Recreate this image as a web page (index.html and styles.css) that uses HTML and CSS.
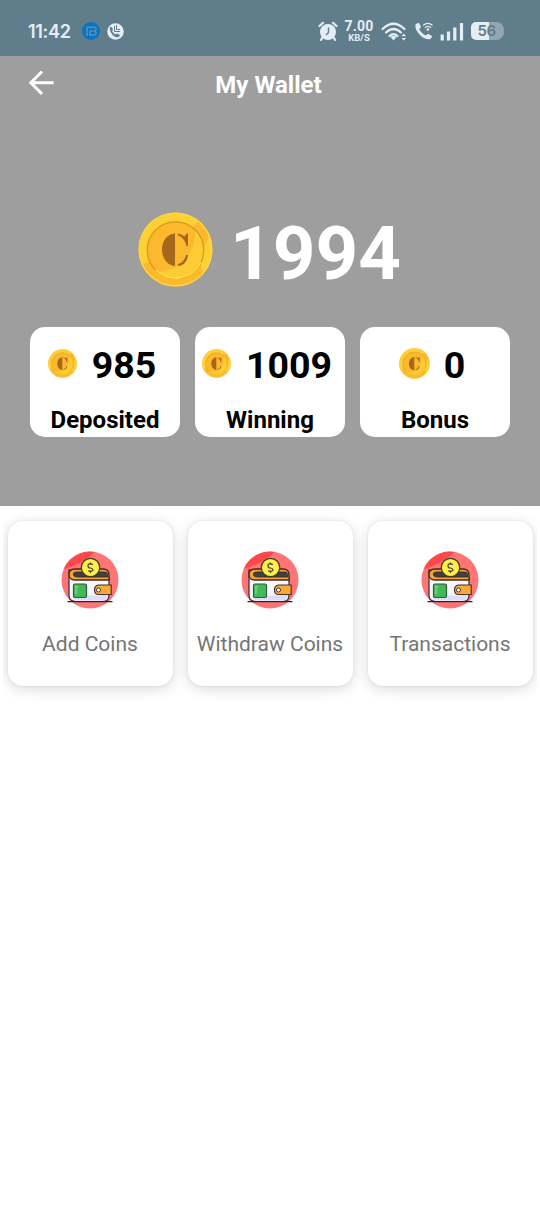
FILE: index.html
```html
<!DOCTYPE html>
<html lang="en">
<head>
<meta charset="utf-8">
<title>My Wallet</title>
<link rel="stylesheet" href="styles.css">
</head>
<body>
<svg class="sprite" width="0" height="0" aria-hidden="true">
  <defs>
    <clipPath id="coin-face"><circle cx="37.5" cy="38" r="28"/></clipPath>
    <clipPath id="disc"><circle cx="30" cy="30" r="28.5"/></clipPath>
  </defs>
  <symbol id="coin" viewBox="0 0 75 75">
    <circle cx="37.5" cy="37.5" r="37" fill="#fcb92c"/>
    <path d="M60 9A36.500 36.500 0 0 0 4 52Q30 48 60 9Z" fill="#fdd033"/>
    <path d="M71 24A36.500 36.500 0 0 1 66 60Q58 55 71 24Z" fill="#fdd033"/>
    <circle cx="37.5" cy="37.5" r="36.4" fill="none" stroke="#fbd944" stroke-width="1.2"/>
    <circle cx="37.5" cy="38" r="28.5" fill="#fdb92e"/>
    <path clip-path="url(#coin-face)" d="M56 8Q62 38 38 56L12 62L38 70L70 54V20Z" fill="#fdcb33"/>
    <circle cx="37.5" cy="38" r="28.2" fill="none" stroke="#d99a20" stroke-width="1.3"/>
    <path d="M63 50A28.2 28.2 0 0 1 18 58" fill="none" stroke="#fde34a" stroke-width="1.3"/>
    <g fill="#a5681b">
      <path d="M37 21.500C29 22 24 29 24 37.500S29 53.500 37 54Z"/>
      <path d="M40 21.500Q44 22 46.500 24.500L48.500 21.500H50V34H48.500C47 28 44 24.500 40 23.500Z"/>
      <path d="M40 54C46 53.500 49.500 49 50 43H48C46.500 48.500 44 51 40 52Z"/>
    </g>
  </symbol>
  <symbol id="wallet" viewBox="0 0 60 60">
    <circle cx="30" cy="30" r="28.500" fill="#ff7475"/>
    <path clip-path="url(#disc)" d="M0 20Q22 15 37 0H0Z" fill="#ff484c"/>
    <path d="M9 20V45Q9 51.500 16 51.500H43Q49 51.500 49 45V27Z" fill="#f7f6ff" stroke="#332c36" stroke-width="1.200"/>
    <path d="M12 46Q13 50 18 50.500H43Q48 50 48 45Z" fill="#dcdcff"/>
    <path d="M49 30H15Q9 30 9 24.500T15 19H43Q49 19 49 25Z" fill="#f6a22b" stroke="#382b24" stroke-width="1.300"/>
    <path d="M14 26Q12 22 17 22H45Q48 22 48 27H18Q15 27 14 26Z" fill="#423e43" stroke="#2b282b" stroke-width=".8"/>
    <circle cx="30.500" cy="17.500" r="9.200" fill="#ffee4b" stroke="#403a24" stroke-width="1.200"/>
    <path d="M33 14.500Q28 12.800 28 15.500T30.500 18Q33 18.500 33 20T28 21M30.500 12.500V14M30.500 21V23" fill="none" stroke="#3c3827" stroke-width="1.200"/>
    <rect x="13.500" y="34" width="13" height="13.500" rx="1.500" fill="#45b859" stroke="#285f37" stroke-width="1.200"/>
    <path d="M16 44V36.500H18" fill="none" stroke="#8dde86" stroke-width="1.200"/>
    <path d="M51.200 35H38.500Q34.500 35.500 34.500 40T38.500 44.500H51.200Z" fill="#f9a936" stroke="#493227" stroke-width="1.200"/>
    <circle cx="38.500" cy="40" r="2" fill="#fff" stroke="#493227" stroke-width="1"/>
    <path d="M7.500 51.700H52.500" stroke="#29242b" stroke-width="1.200"/>
  </symbol>
</svg>

<div class="status">
  <span class="clock">11:42</span>
  <svg class="app-dot" width="18" height="18" viewBox="0 0 18 18"><circle cx="9" cy="9" r="9" fill="#0875c4"/><path d="M5 14V5.200H12.500Q14 5.200 14 7T12.500 9H8M12.500 9Q14 9.500 14 11.200T12.500 13H8V9" fill="none" stroke="#5e8eae" stroke-width="1.500"/></svg>
  <svg class="call-dot" width="17" height="17" viewBox="0 0 17 17"><circle cx="8.500" cy="8.500" r="8.300" fill="#e5edf7"/><path d="M2.800 4L5 4.200L6 7L5 8.200Q6.500 10.500 8.800 11.500L10.500 10.500L13.200 12.500Q11 15.200 7.500 13.500Q2.500 10 2.800 4Z" fill="#607d8b"/><path d="M7.500 3V8.500H13M9.500 2V6.500H13" fill="none" stroke="#607d8b" stroke-width="1"/></svg>
  <span class="grow"></span>
  <svg class="alarm" width="20" height="20" viewBox="0 0 20 20"><circle cx="10" cy="11" r="8" fill="#e5edf7"/><path d="M1.500 5L5 1.800M15 1.800L18.500 5M4 17L3 19M16 17L17 19" stroke="#e5edf7" stroke-width="2.200" stroke-linecap="round"/><path d="M10.500 6.500V11.500L8 14" fill="none" stroke="#607d8b" stroke-width="1.400"/></svg>
  <span class="speed"><b>7.00</b><small>KB/S</small></span>
  <svg class="wifi" width="26" height="19" viewBox="0 0 26 19"><g fill="none" stroke="#e5edf7" stroke-width="2.200" stroke-linecap="round"><path d="M1.500 7Q12.500-3.500 23.500 7"/><path d="M5 10.500Q12.500 3.500 20 10.500"/><path d="M8.500 14Q12.500 10 16.500 14"/></g><path d="M9.500 15Q12.500 12.500 15.500 15L12.500 18.500Z" fill="#e5edf7"/><path d="M20.500 14.200L22.800 11.500L25 14.200ZM20.500 16L22.800 18.600L25 16Z" fill="#e5edf7"/></svg>
  <svg class="phone" width="18" height="18" viewBox="0 0 18 18"><path d="M.5 2.500Q2 .8 4 1L6 5L4.200 7.200Q6.500 11.800 11 13.500L13 11.800L17 14Q17 16 15 17.200Q9.500 18 4.500 12.500Q-.5 7 .5 2.500Z" fill="#e5edf7"/><g fill="none" stroke="#e5edf7" stroke-width="1.200"><path d="M8 3.500Q13-.8 17.500 3.500"/><path d="M9.800 5.700Q13 3 16 5.700"/></g><circle cx="12.900" cy="7.500" r="1.300" fill="#e5edf7"/></svg>
  <svg class="signal" width="24" height="19" viewBox="0 0 24 19"><path d="M2.200 12.500V18.500M8.500 9.500V18.500M14.800 5.500V18.500M21.500 1V18.500" stroke="#e5edf7" stroke-width="3.200"/></svg>
  <span class="battery">56</span>
</div>

<header class="hero">
  <div class="topbar">
    <svg class="back" width="26" height="26" viewBox="0 0 26 26"><path d="M24.500 12.700H2M13 1.500L1.800 12.700L13 23.900" fill="none" stroke="#fff" stroke-width="2.900"/></svg>
    <h1>My Wallet</h1>
  </div>
  <div class="total"><svg class="coin-lg"><use href="#coin"/></svg><span>1994</span></div>
  <div class="balances">
    <div class="balance"><div class="amount"><svg><use href="#coin"/></svg><span>985</span></div><p>Deposited</p></div>
    <div class="balance"><div class="amount"><svg><use href="#coin"/></svg><span>1009</span></div><p>Winning</p></div>
    <div class="balance"><div class="amount bonus"><svg><use href="#coin"/></svg><span>0</span></div><p>Bonus</p></div>
  </div>
</header>

<main class="actions">
  <div class="action"><svg><use href="#wallet"/></svg><span>Add Coins</span></div>
  <div class="action"><svg><use href="#wallet"/></svg><span>Withdraw Coins</span></div>
  <div class="action"><svg><use href="#wallet"/></svg><span>Transactions</span></div>
</main>
</body>
</html>
```
FILE: styles.css
```css
* { box-sizing: border-box; }
body { margin: 0; min-height: 1206px; background: #fff; font-family: Roboto, sans-serif; }
svg { display: block; flex: none; }
.sprite { position: absolute; }

.status { display: flex; align-items: center; height: 56px; padding: 6px 36px 0 28px; background: #607d8b; color: #e5edf7; }
.clock { width: 54px; margin-top: 1px; font: 600 18px/20px Inter, sans-serif; letter-spacing: -.3px; }
.call-dot { margin-left: 7px; }
.grow { flex: 1; }
.speed { display: flex; flex-direction: column; align-items: center; width: 30px; margin: 0 6px 0 6px; }
.speed b { font-size: 14px; line-height: 13px; font-weight: 700; letter-spacing: .2px; margin-top: -1px; }
.speed small { font-size: 9.500px; line-height: 9px; font-weight: 700; }
.wifi { margin-left: 1px; }
.phone { margin-left: 8px; }
.signal { margin: 0 7px 0 7px; }
.battery { width: 33px; height: 18px; padding-right: 2px; border-radius: 5px 8px 8px 5px; background: linear-gradient(90deg, #e5edf7 56%, #91a7b4 56%); color: #607d8b; font: 600 15px/18px Inter, sans-serif; letter-spacing: -.5px; text-align: center; }

.hero { height: 450px; background: #9e9e9e; }
.topbar { display: grid; grid-template-columns: 60px 1fr 63px; height: 59px; align-items: center; }
.back { margin: -6px 0 0 29px; }
.topbar h1 { margin: 0; color: #fff; font-size: 24px; line-height: 28px; font-weight: 700; text-align: center; position: relative; top: -.5px; }
.total { display: flex; justify-content: center; align-items: center; gap: 17px; height: 88px; margin-top: 95px; padding-right: 1px; color: #fff; font-size: 74.500px; line-height: 88px; font-weight: 700; }
.coin-lg { width: 75px; height: 75px; margin-bottom: 10px; }
.balances { display: flex; gap: 15px; padding: 28.500px 30px 0; }
.balance { width: 150px; height: 110px; border-radius: 15px; background: #fff; color: #000; font-weight: 700; }
.amount { display: flex; justify-content: center; align-items: center; gap: 15px; height: 44px; margin-top: 16px; padding-right: 6px; font-size: 37.500px; line-height: 44px; }
.amount svg { width: 29px; height: 29px; margin-bottom: 3px; }
.amount.bonus { gap: 14px; }
.amount.bonus svg { width: 31px; height: 31px; }
.balance p { margin: 19px 0 0; font-size: 24px; line-height: 28px; text-align: center; }

.actions { display: flex; gap: 15px; margin: 0 3px; padding: 14.500px 4.500px; height: 195px; overflow: hidden; }
.action { display: flex; flex-direction: column; align-items: center; flex: none; width: 165px; height: 165.500px; padding-top: 29px; border-radius: 15px; background: #fff; box-shadow: 0 3px 14px rgba(0,0,0,.15), 0 0 3px rgba(0,0,0,.08); color: #757575; }
.action svg { width: 60px; height: 60px; }
.action span { margin-top: 22px; font-size: 21px; line-height: 25px; white-space: nowrap; }
```
